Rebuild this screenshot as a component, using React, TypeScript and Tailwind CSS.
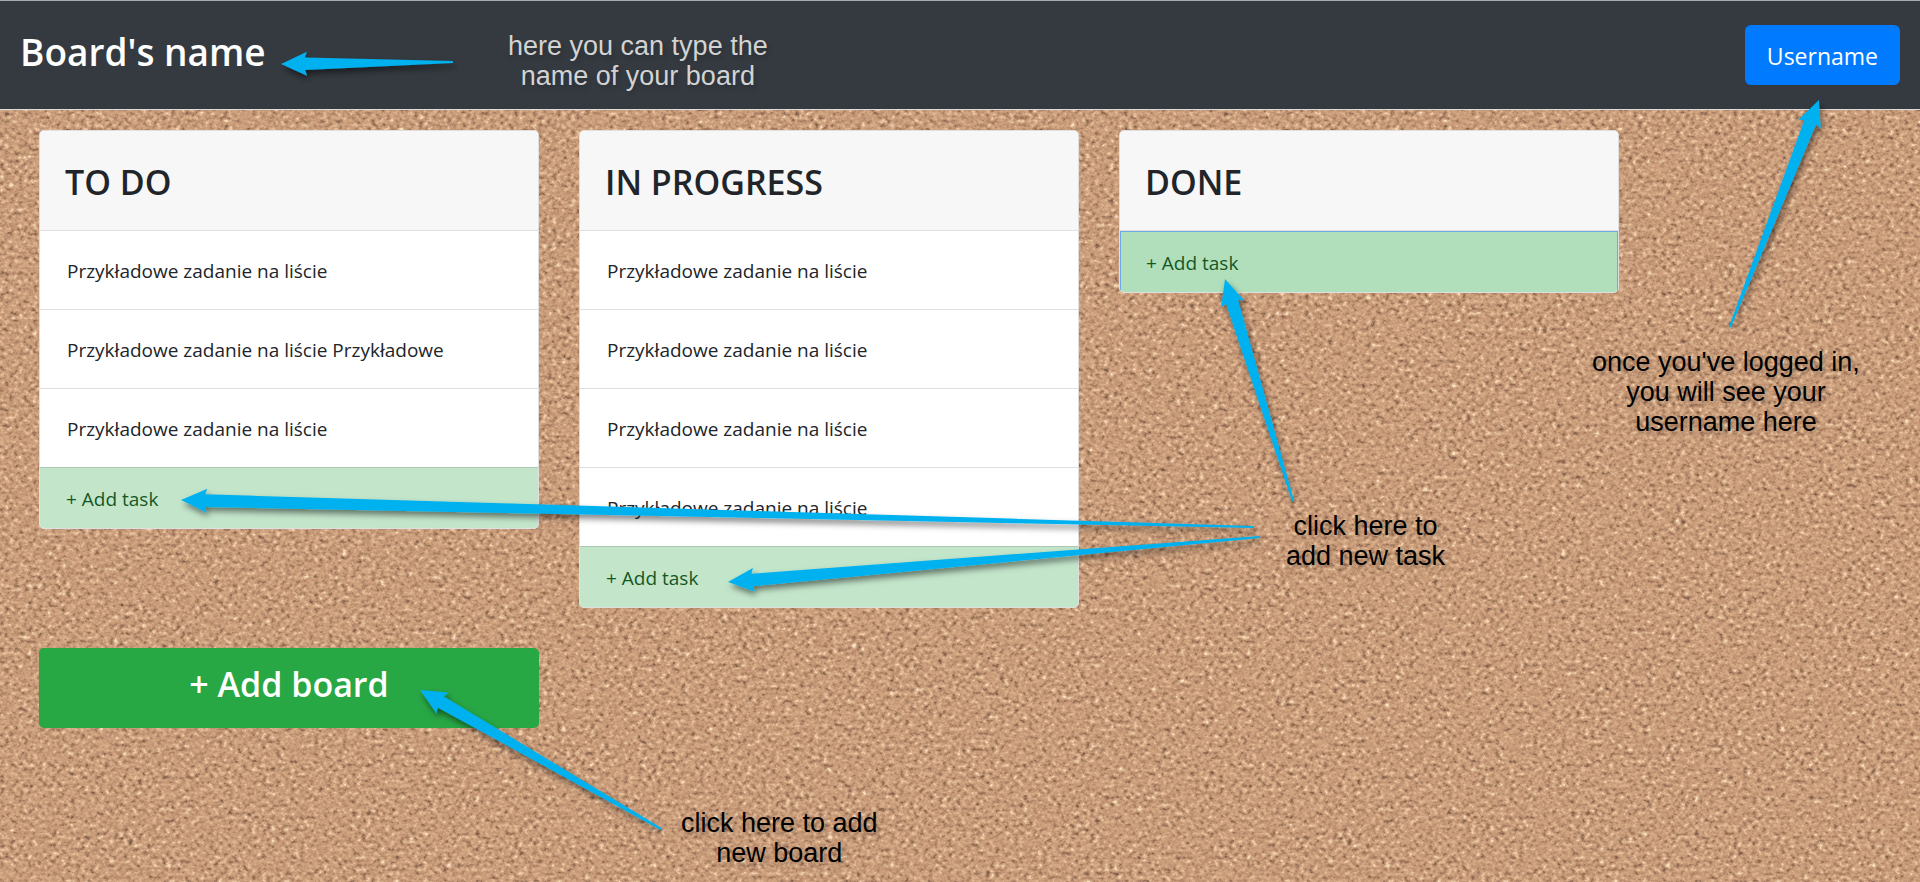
type Point = [number, number];

type Column = {
  title: string;
  tasks: string[];
  focused?: boolean;
};

type Arrow = { tip: Point; tail: Point };

const SAMPLE = "Przykładowe zadanie na liście";

const columns: Column[] = [
  { title: "TO DO", tasks: [SAMPLE, `${SAMPLE} Przykładowe`, SAMPLE] },
  { title: "IN PROGRESS", tasks: [SAMPLE, SAMPLE, SAMPLE, SAMPLE] },
  { title: "DONE", tasks: [], focused: true },
];

const arrows: Arrow[] = [
  { tip: [281, 64], tail: [453, 62] },
  { tip: [181, 500], tail: [1254, 527] },
  { tip: [728, 582], tail: [1260, 537] },
  { tip: [1225, 279], tail: [1293, 501] },
  { tip: [1819, 100], tail: [1730, 327] },
  { tip: [420, 690], tail: [661, 829] },
];

// Outline of a tapered arrow, from its tip round both barbs to its thin tail.
function arrowPoints({ tip, tail }: Arrow): string {
  const dx = tail[0] - tip[0];
  const dy = tail[1] - tip[1];
  const length = Math.hypot(dx, dy);
  const ux = dx / length;
  const uy = dy / length;
  const at = (along: number, side: number) =>
    `${(tip[0] + ux * along - uy * side).toFixed(1)},${(tip[1] + uy * along + ux * side).toFixed(1)}`;
  return [
    at(0, 0),
    at(26, -12),
    at(24, -6.3),
    at(length, -1),
    at(length, 1),
    at(24, 6.3),
    at(26, 12),
  ].join(" ");
}

function Cork() {
  return (
    <svg className="absolute inset-0 -z-10 h-full w-full" aria-hidden="true">
      <filter id="cork" x="0" y="0" width="100%" height="100%" colorInterpolationFilters="sRGB">
        <feTurbulence type="fractalNoise" baseFrequency="0.21 0.25" numOctaves="3" seed="21" />
        <feColorMatrix
          type="matrix"
          values="1.1 0.7 0 0 -0.4  1.1 0.7 0 0 -0.4  1.1 0.7 0 0 -0.4  0 0 0 0 1"
        />
        <feComponentTransfer>
          <feFuncR type="table" tableValues="0.47 0.60 0.72 0.79 0.84 0.91 0.98" />
          <feFuncG type="table" tableValues="0.35 0.45 0.55 0.615 0.67 0.77 0.89" />
          <feFuncB type="table" tableValues="0.27 0.35 0.43 0.48 0.53 0.63 0.77" />
        </feComponentTransfer>
      </filter>
      <rect width="100%" height="100%" filter="url(#cork)" />
    </svg>
  );
}

function BoardColumn({ title, tasks, focused }: Column) {
  return (
    <section className="w-[500px] overflow-hidden rounded-[5px] border border-[#dfdfdf] bg-white">
      <h2 className="border-b border-[#dfdfdf] bg-[#f7f7f7] px-[25px] pt-[30px] pb-[27px] text-[34px] leading-[42px] font-semibold">
        {title}
      </h2>
      {tasks.length > 0 && (
        <ul>
          {tasks.map((task, index) => (
            <li
              key={index}
              className="border-b border-[#dfdfdf] px-[27px] pt-[25px] pb-[23px] text-[19px] leading-[30px] last:border-[#abc9b2]"
            >
              {task}
            </li>
          ))}
        </ul>
      )}
      <button
        type="button"
        className={
          focused
            ? "block w-full border border-b-0 border-[#6ea8e6] bg-[#b1dfbb] px-[25px] pt-4 pb-[14px] text-left text-[19px] leading-[30px] text-[#155724]"
            : "block w-full bg-[#c3e6cb] px-[26px] pt-4 pb-[14px] text-left text-[19px] leading-[30px] text-[#155724]"
        }
      >
        + Add task
      </button>
    </section>
  );
}

function Annotations() {
  const note =
    "absolute text-center font-['Liberation_Sans',Arial,sans-serif] text-[27px] leading-[30px] whitespace-nowrap [text-shadow:2px_3px_5px_rgba(0,0,0,0.2)]";
  return (
    <div className="pointer-events-none absolute inset-0 overflow-hidden">
      <svg className="absolute top-0 left-0" width="1920" height="882" aria-hidden="true">
        <filter id="shade" x="0" y="0" width="1920" height="882" filterUnits="userSpaceOnUse">
          <feDropShadow dx="2" dy="4" stdDeviation="3" floodColor="#000" floodOpacity="0.5" />
        </filter>
        <g fill="#03b1f0" filter="url(#shade)">
          {arrows.map((arrow, index) => (
            <polygon key={index} points={arrowPoints(arrow)} />
          ))}
        </g>
      </svg>
      <p className={`${note} top-[31px] left-[508px] text-[#d3d3d3]`}>
        here you can type the
        <br />
        name of your board
      </p>
      <p className={`${note} top-[347px] left-[1592px] text-black`}>
        once you've logged in,
        <br />
        you will see your
        <br />
        username here
      </p>
      <p className={`${note} top-[511px] left-[1286px] text-black`}>
        click here to
        <br />
        add new task
      </p>
      <p className={`${note} top-[808px] left-[681px] text-black`}>
        click here to add
        <br />
        new board
      </p>
    </div>
  );
}

export default function App() {
  return (
    <div className="relative isolate min-h-screen font-['Open_Sans','Noto_Sans',sans-serif] text-[#212529]">
      <Cork />
      <header className="flex items-center justify-between border-t border-b border-t-[#a9abad] border-b-[#dcdcdc] bg-[#343a40] px-5 py-6">
        <h1 className="pb-[6px] text-[37px] leading-[50px] font-semibold text-white">Board's name</h1>
        <button
          type="button"
          className="rounded-md bg-[#007bff] px-[22px] pt-3 pb-[10px] text-[23px] leading-[38px] text-white"
        >
          Username
        </button>
      </header>
      <main className="flex flex-wrap items-start gap-10 px-[39px] py-5">
        {columns.map((column) => (
          <BoardColumn key={column.title} {...column} />
        ))}
        <button
          type="button"
          className="w-[500px] rounded-[5px] bg-[#28a745] pt-[15px] pb-[23px] text-[34px] leading-[42px] font-semibold text-white"
        >
          + Add board
        </button>
      </main>
      <Annotations />
    </div>
  );
}
